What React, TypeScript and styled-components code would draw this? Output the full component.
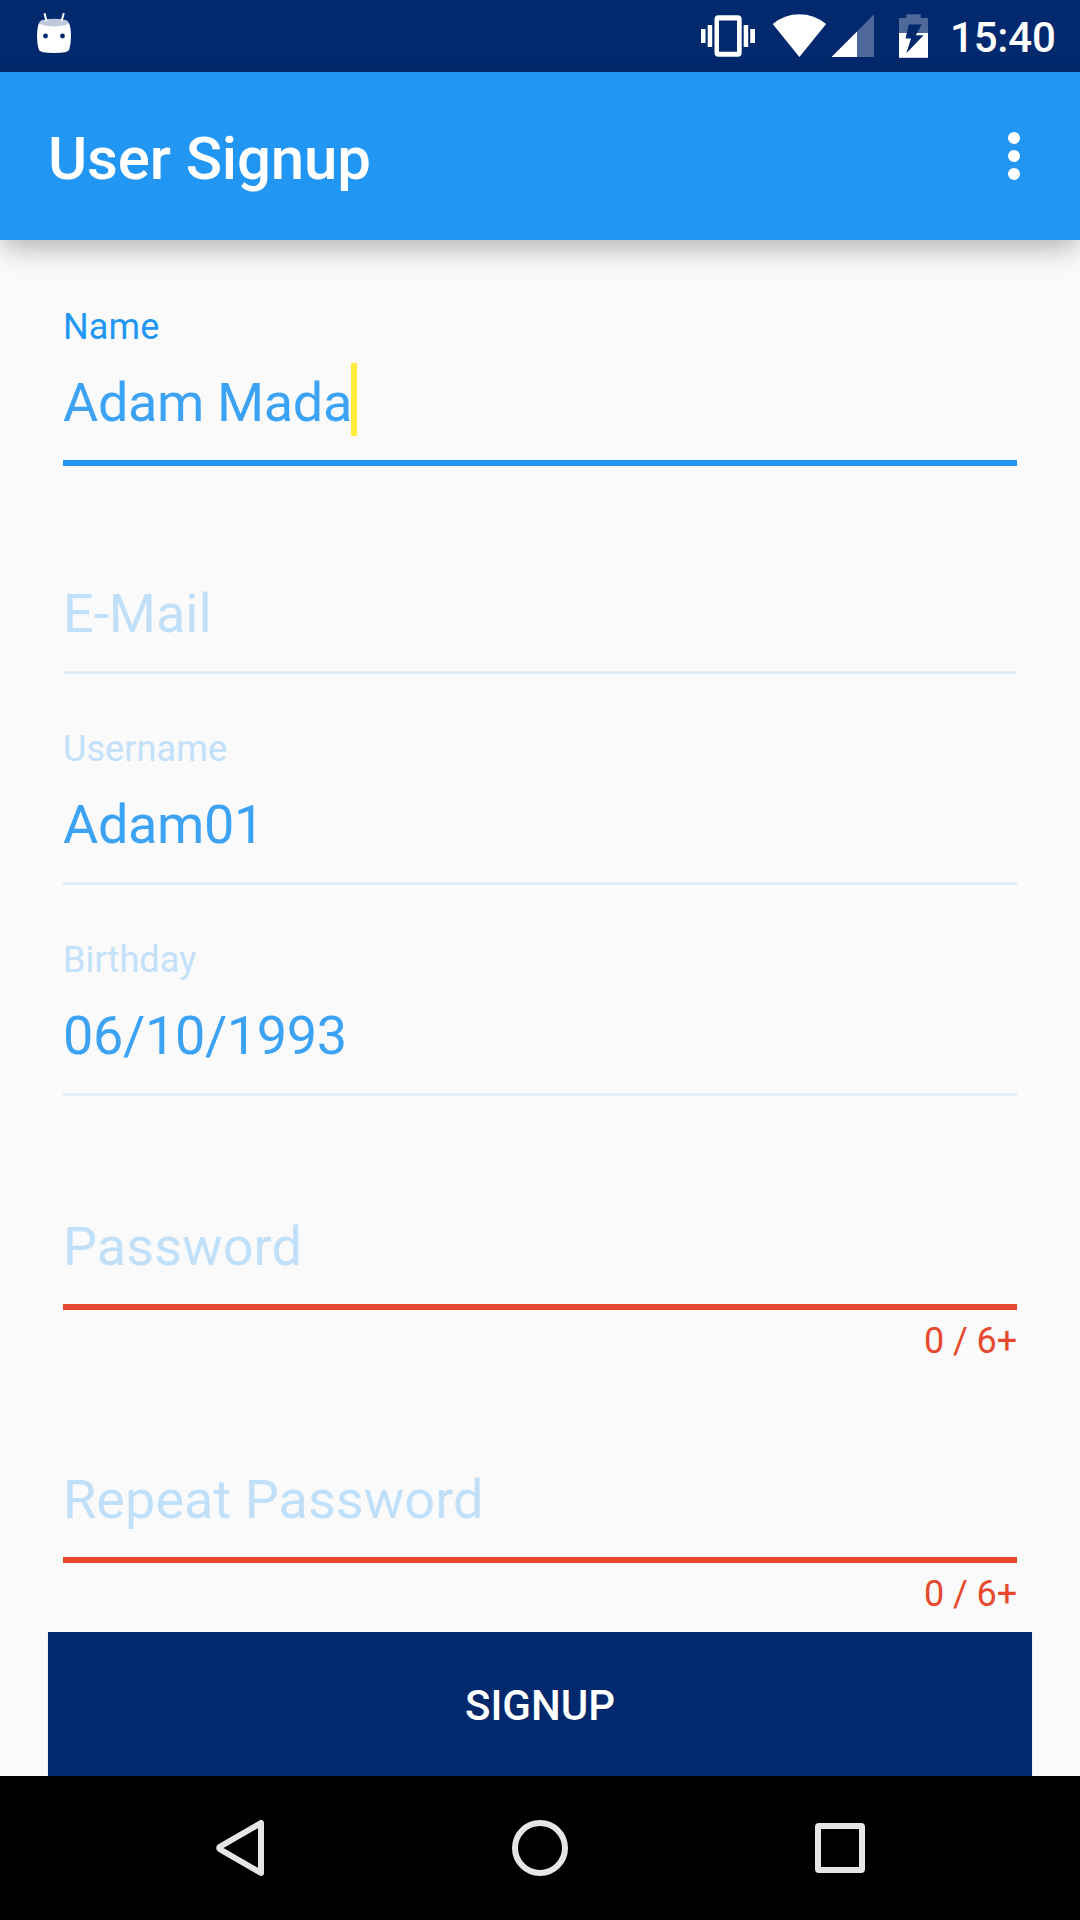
import React from "react";
import styled, { createGlobalStyle } from "styled-components";

const navy = "#02286d";
const blue = "#2196f3";
const paper = "#fafafa";
const danger = "#e7492e";

const GlobalStyle = createGlobalStyle`
  * { box-sizing: border-box; }
  body {
    margin: 0;
    background: ${paper};
    font-family: Roboto, "Liberation Sans", sans-serif;
  }
`;

const Screen = styled.div`
  display: flex;
  flex-direction: column;
  width: 1080px;
  height: 1920px;
  overflow: hidden;
  background: ${paper};
`;

const StatusBar = styled.header`
  display: flex;
  align-items: flex-start;
  justify-content: space-between;
  flex: none;
  height: 72px;
  background: ${navy};
`;

const StatusGroup = styled.div`
  display: flex;
  align-items: flex-start;
`;

const StatusIcon = styled.svg`
  display: block;
  flex: none;
`;

const Clock = styled.time`
  width: 130px;
  padding-top: 13px;
  font-size: 42px;
  font-weight: 500;
  line-height: 50px;
  letter-spacing: -0.2px;
  color: #fff;
  white-space: nowrap;
`;

const AppBar = styled.div`
  display: flex;
  align-items: center;
  justify-content: space-between;
  flex: none;
  height: 168px;
  padding: 0 48px;
  background: ${blue};
  z-index: 1;
  box-shadow: 0 11px 26px -3px rgba(0, 0, 0, 0.29);
`;

const Title = styled.h1`
  margin: 0;
  padding-top: 6px;
  font-size: 60px;
  font-weight: 500;
  line-height: 70px;
  letter-spacing: -0.15px;
  color: #fff;
  white-space: nowrap;
`;

const MenuButton = styled.button`
  display: flex;
  flex-direction: column;
  align-items: center;
  gap: 6px;
  width: 36px;
  padding: 0;
  border: 0;
  background: none;
`;

const Dot = styled.i`
  width: 12px;
  height: 12px;
  border-radius: 50%;
  background: #fff;
`;

const Form = styled.main`
  display: flex;
  flex-direction: column;
  flex: none;
  height: 1536px;
  padding: 66px 48px 0;
`;

const Field = styled.div<{ $tall?: boolean }>`
  display: flex;
  flex-direction: column;
  flex: none;
  height: ${(p) => (p.$tall ? 253 : 211)}px;
  padding: 0 15px;

  &:last-of-type {
    height: 212px;
  }
`;

const Label = styled.label<{ $focused?: boolean }>`
  height: 42px;
  margin-bottom: 15px;
  font-size: 36px;
  line-height: 42px;
  letter-spacing: 0.1px;
  color: ${(p) => (p.$focused ? blue : "#c2e0f9")};
`;

const ValueRow = styled.div`
  display: flex;
  height: 73px;
  margin-bottom: 24px;
`;

const Value = styled.span<{ $hint?: boolean }>`
  margin-top: 8px;
  font-size: 54px;
  line-height: 64px;
  letter-spacing: ${(p) => (p.$hint ? "0.05px" : "-0.35px")};
  color: ${(p) => (p.$hint ? "#c0dff8" : "#3ca2f4")};
  white-space: nowrap;
`;

const Caret = styled.span`
  width: 6px;
  height: 73px;
  margin-left: -1px;
  background: #ffeb3b;
`;

const Underline = styled.div<{ $tone: "idle" | "focus" | "error" }>`
  flex: none;
  height: ${(p) => (p.$tone === "idle" ? 3 : 6)}px;
  background: ${(p) =>
    p.$tone === "idle" ? "#e1eef9" : p.$tone === "focus" ? blue : danger};
`;

const Counter = styled.div`
  margin-top: 10px;
  font-size: 36px;
  line-height: 42px;
  letter-spacing: -0.1px;
  text-align: right;
  color: ${danger};
`;

const SubmitButton = styled.button`
  flex: none;
  height: 144px;
  margin-top: 17px;
  padding: 3px 0 0;
  border: 0;
  background: ${navy};
  box-shadow: 0 1px 2px rgba(0, 0, 0, 0.12);
  font: 500 42px/50px Roboto, "Liberation Sans", sans-serif;
  color: #fff;
`;

const NavBar = styled.nav`
  display: flex;
  align-items: center;
  justify-content: space-between;
  flex: none;
  height: 144px;
  padding: 0 200px;
  background: #000;
  z-index: 1;
`;

type FieldData = {
  label?: string;
  value?: string;
  hint?: string;
  focused?: boolean;
  counter?: string;
};

const fields: FieldData[] = [
  { label: "Name", value: "Adam Mada", focused: true },
  { hint: "E-Mail" },
  { label: "Username", value: "Adam01" },
  { label: "Birthday", value: "06/10/1993" },
  { hint: "Password", counter: "0 / 6+" },
  { hint: "Repeat Password", counter: "0 / 6+" },
];

const FormField = ({ data }: { data: FieldData }) => (
  <Field $tall={Boolean(data.counter)}>
    <Label $focused={data.focused}>{data.label}</Label>
    <ValueRow>
      <Value $hint={!data.value}>{data.value ?? data.hint}</Value>
      {data.focused && <Caret />}
    </ValueRow>
    <Underline $tone={data.focused ? "focus" : data.counter ? "error" : "idle"} />
    {data.counter && <Counter>{data.counter}</Counter>}
  </Field>
);

const MarshmallowIcon = () => (
  <StatusIcon width="108" height="72" viewBox="0 0 108 72">
    <path
      d="M39 23 Q54 28.500 69 23 Q71 28 71 36 Q71 44 69.300 49.500 Q68.500 53 54 53 Q39.500 53 38.700 49.500 Q37 44 37 36 Q37 28 39 23Z"
      fill="#fff"
    />
    <ellipse cx="54" cy="22.600" rx="14.700" ry="3.900" fill="#bfc8da" />
    <path d="M44.500 13.200 46.600 21.200M63.800 13.200 61.500 21.200" stroke="#fff" strokeWidth="2" />
    <circle cx="45.500" cy="36" r="2.400" fill={navy} />
    <circle cx="62.500" cy="36" r="2.400" fill={navy} />
  </StatusIcon>
);

const VibrateIcon = () => (
  <StatusIcon width="66" height="72" viewBox="697 0 66 72">
    <path
      fill="#fff"
      d="M701 29h4.500v14H701zM707.700 25h4.500v22h-4.500zM743.700 25h4.500v22h-4.500zM750.300 29h4.700v14h-4.700z"
    />
    <path
      fill="#fff"
      fillRule="evenodd"
      d="M718.500 15.300h19.200a4 4 0 0 1 4 4v33.500a4 4 0 0 1-4 4h-19.200a4 4 0 0 1-4-4V19.300a4 4 0 0 1 4-4zM719 20.600v31.200h18V20.600z"
    />
  </StatusIcon>
);

const WifiIcon = () => (
  <StatusIcon width="66" height="72" viewBox="763 0 66 72">
    <path fill="#fff" d="M799.400 57 772.700 24Q784.500 14.200 799.400 14.200T826.100 24Z" />
  </StatusIcon>
);

const SignalIcon = () => (
  <StatusIcon width="62" height="72" viewBox="829 0 62 72">
    <path fill="#fff" fillOpacity="0.3" d="M857 31.500 874 14.300V57H857Z" />
    <path fill="#fff" d="M831.500 57 857 31.500V57Z" />
  </StatusIcon>
);

const BatteryIcon = () => (
  <StatusIcon width="59" height="72" viewBox="891 0 59 72">
    <path fill="#fff" fillOpacity="0.3" d="M899 33V18h7.300v-3.700h14.400V18H928v15Z" />
    <path fill="#fff" d="M899 33h29v24.800h-29Z" />
    <path fill={navy} d="M908.800 24.600H921.700L915.800 35.200H923.600L906.300 53.300 911 38.600H905.600Z" />
  </StatusIcon>
);

const BackIcon = () => (
  <svg width="80" height="80" viewBox="200 1808 80 80">
    <path
      d="M261 1823V1873L220.300 1849.500Q218 1848 220.300 1846.500Z"
      fill="none"
      stroke="#e6e6e6"
      strokeWidth="6"
      strokeLinejoin="round"
    />
  </svg>
);

const HomeIcon = () => (
  <svg width="80" height="80" viewBox="0 0 80 80">
    <circle cx="40" cy="40" r="25" fill="none" stroke="#e6e6e6" strokeWidth="6" />
  </svg>
);

const RecentsIcon = () => (
  <svg width="80" height="80" viewBox="800 1808 80 80">
    <rect x="818" y="1826" width="44" height="44" rx="1" fill="none" stroke="#e6e6e6" strokeWidth="6" strokeLinejoin="round" />
  </svg>
);

export default function App() {
  return (
    <>
      <GlobalStyle />
      <Screen>
        <StatusBar>
          <MarshmallowIcon />
          <StatusGroup>
            <VibrateIcon />
            <WifiIcon />
            <SignalIcon />
            <BatteryIcon />
            <Clock>15:40</Clock>
          </StatusGroup>
        </StatusBar>
        <AppBar>
          <Title>User Signup</Title>
          <MenuButton aria-label="More options">
            <Dot />
            <Dot />
            <Dot />
          </MenuButton>
        </AppBar>
        <Form>
          {fields.map((data) => (
            <FormField key={data.label ?? data.hint} data={data} />
          ))}
          <SubmitButton>SIGNUP</SubmitButton>
        </Form>
        <NavBar>
          <BackIcon />
          <HomeIcon />
          <RecentsIcon />
        </NavBar>
      </Screen>
    </>
  );
}
